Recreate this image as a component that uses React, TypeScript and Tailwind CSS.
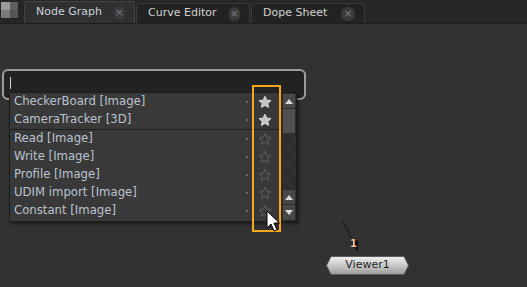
const rows = [
  { label: "CheckerBoard [Image]", fav: true },
  { label: "CameraTracker [3D]", fav: true },
  { label: "Read [Image]", fav: false },
  { label: "Write [Image]", fav: false },
  { label: "Profile [Image]", fav: false },
  { label: "UDIM import [Image]", fav: false },
  { label: "Constant [Image]", fav: false },
];

const Star = ({ filled }: { filled: boolean }) => (
  <svg width="14" height="14" viewBox="0 0 24 24">
    <path
      d="M12 2.5l2.9 6.2 6.8.8-5 4.6 1.3 6.7L12 17.5l-6 3.3 1.3-6.7-5-4.6 6.8-.8z"
      fill={filled ? "#c4c4c4" : "none"}
      stroke={filled ? "#d0d0d0" : "#585858"}
      strokeWidth="2"
      strokeLinejoin="round"
    />
  </svg>
);

const Tab = ({ label, active }: { label: string; active?: boolean }) => (
  <div
    className={
      active
        ? "flex items-center h-[22px] w-[111px] pl-[11px] pr-[9px] gap-3 bg-[#303030] border border-b-0 border-[#444] rounded-t-[3px] text-[#c9d3dd]"
        : "flex items-center h-[20px] w-[114px] pl-[11px] pr-[9px] gap-3 bg-[#232323] border border-b-0 border-[#3a3a3a] rounded-t-[3px] text-[#d2d2d2]"
    }
  >
    <span className="flex-1 whitespace-nowrap">{label}</span>
    <span className="w-[14px] h-[14px] rounded-full bg-[#3a3a3a] flex items-center justify-center text-[#6c6c6c] text-[11px] font-bold leading-none">
      ×
    </span>
  </div>
);

export default function App() {
  return (
    <div
      className="w-[527px] h-[287px] bg-[#323232] flex flex-col relative overflow-hidden text-[11px]"
      style={{ fontFamily: '"DejaVu Sans", Verdana, sans-serif' }}
    >
      <div className="h-[24px] bg-[#262626] flex items-end gap-[1px] pl-[1px] border-b border-[#1e1e1e]">
        <div className="self-start mt-[2px] w-[17px] h-[16px] grid grid-cols-2 mr-[5px]">
          <div className="bg-[#9a9a9a]" />
          <div className="bg-[#5e5e5e]" />
          <div className="bg-[#7a7a7a]" />
          <div className="bg-[#555]" />
        </div>
        <Tab label="Node Graph" active />
        <Tab label="Curve Editor" />
        <Tab label="Dope Sheet" />
      </div>

      <div className="flex-1 relative">
        {/* search field */}
        <div className="absolute left-[2px] top-[45px] w-[304px] h-[31px] border-2 border-[#9c9c9c] rounded-[6px] bg-[#222]">
          <div className="ml-[6px] mt-[6px] w-[1px] h-[12px] bg-[#cfcfcf]" />
        </div>

        {/* result list */}
        <div className="absolute left-[9px] top-[68px] w-[288px] h-[130px] bg-[#393939] border border-[#1c1c1c] shadow-[2px_2px_3px_rgba(0,0,0,0.45)] flex">
          <div className="flex-1 flex flex-col">
            {rows.map((r, i) => (
              <div
                key={r.label}
                className={
                  "h-[18px] flex items-center pl-[4px] text-[#b9c3cf] text-[11.7px] " +
                  (i === 1 ? "border-b border-[#1e1e1e] h-[19px]" : "")
                }
              >
                <span className="flex-1 whitespace-nowrap">{r.label}</span>
                <span className="w-[2px] h-[2px] bg-[#6a6a6a] mr-[10px]" />
                <span className="w-[14px] flex justify-center mr-[9px]">
                  <Star filled={r.fav} />
                </span>
              </div>
            ))}
          </div>
          <div className="w-[15px] flex flex-col border-l border-[#2a2a2a]">
            <div className="h-[16px] bg-[#484848] border border-[#2a2a2a] flex items-center justify-center">
              <div className="w-0 h-0 border-x-[4px] border-x-transparent border-b-[5px] border-b-[#d8d8d8]" />
            </div>
            <div className="h-[24px] bg-[#505050] border-x border-[#2a2a2a]" />
            <div className="flex-1 bg-[#2c2c2c] bg-[repeating-linear-gradient(45deg,#2a2a2a_0px,#2a2a2a_1px,#333_1px,#333_2px)]" />
            <div className="h-[16px] bg-[#484848] border border-[#2a2a2a] flex items-center justify-center">
              <div className="w-0 h-0 border-x-[4px] border-x-transparent border-b-[5px] border-b-[#d8d8d8]" />
            </div>
            <div className="h-[16px] bg-[#484848] border border-t-0 border-[#2a2a2a] flex items-center justify-center">
              <div className="w-0 h-0 border-x-[4px] border-x-transparent border-t-[5px] border-t-[#d8d8d8]" />
            </div>
          </div>
        </div>

        {/* highlight */}
        <div className="absolute left-[252px] top-[61px] w-[29px] h-[147px] border-2 border-[#f7a816]" />

        {/* mouse pointer */}
        <svg className="absolute left-[266px] top-[186px]" width="14" height="22" viewBox="0 0 14 22">
          <path d="M1 1v17l4-4 3 7 3-1.3-3-6.7h5.5z" fill="#fff" stroke="#000" strokeWidth="1" />
        </svg>

        {/* pipe + arrow */}
        <svg className="absolute left-[338px] top-[195px]" width="26" height="36" viewBox="0 0 26 36">
          <line x1="5" y1="2" x2="16" y2="25" stroke="#111" strokeWidth="1.5" strokeDasharray="1.5 1.2" />
          <path d="M13 24l7-3 0 12z" fill="#111" />
        </svg>
        <span className="absolute left-[350px] top-[212px] text-[10px] font-bold text-[#f0c29a] [text-shadow:0_0_1px_#000]">
          1
        </span>

        {/* viewer node */}
        <div className="absolute left-[326px] top-[232px] w-[83px] h-[19px]">
          <svg className="absolute inset-0" width="83" height="19" viewBox="0 0 83 19">
            <defs>
              <linearGradient id="vg" x1="0" y1="0" x2="0" y2="1">
                <stop offset="0" stopColor="#f0f0f0" />
                <stop offset="0.5" stopColor="#c8c8c8" />
                <stop offset="1" stopColor="#9a9a9a" />
              </linearGradient>
            </defs>
            <path d="M5 0.5h73l4.5 9-4.5 9h-73l-4.5-9z" fill="url(#vg)" stroke="#5a5a5a" strokeWidth="1" />
          </svg>
          <div className="relative h-full flex items-center justify-center text-[#1e1e1e] text-[11px]">Viewer1</div>
        </div>
      </div>
    </div>
  );
}
